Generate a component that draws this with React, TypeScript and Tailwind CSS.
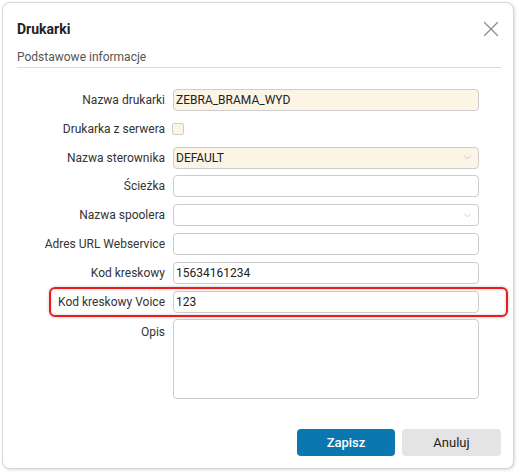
import { X, ChevronDown } from "lucide-react"

const font = { fontFamily: "Roboto, 'Liberation Sans', sans-serif" }

function Field({
  label,
  value,
  cream,
  select,
}: {
  label: string
  value?: string
  cream?: boolean
  select?: boolean
}) {
  return (
    <div className="flex items-center h-[22px]">
      <label className="w-[156px] shrink-0 text-right text-[12px] text-[#333] pr-[8px] whitespace-nowrap">{label}</label>
      <div
        className={`relative flex items-center h-[22px] w-[306px] rounded-[4px] border border-[#cdcdcd] px-[2px] text-[12px] text-[#222] ${
          cream ? "bg-[#fcf4e4]" : "bg-white"
        }`}
      >
        <span>{value}</span>
        {select && <ChevronDown className="absolute right-[5px] w-[11px] h-[11px] text-[#b5b5b5]" strokeWidth={1.5} />}
      </div>
    </div>
  )
}

export default function App() {
  return (
    <div className="w-[520px] h-[473px] bg-white" style={font}>
      <div className="ml-[2px] mt-[2px] w-[512px] h-[467px] flex flex-col rounded-[8px] border border-[#d6d6d6] bg-white pl-[14px] pr-[12px] pt-[16px] pb-[12px] shadow-[1px_1px_3px_rgba(0,0,0,0.15)]">
        {/* Header */}
        <div className="flex items-center justify-between h-[20px]">
          <h1 className="text-[14px] font-bold text-[#222]">Drukarki</h1>
          <X className="w-[26px] h-[26px] text-[#8a8a8a] -mr-[3px]" strokeWidth={1.1} />
        </div>
        <div className="mt-[8px] h-[21px] leading-[20px] text-[12px] text-[#555] border-b border-[#dcdcdc]">
          Podstawowe informacje
        </div>

        {/* Form */}
        <div className="mt-[21px] flex flex-col gap-[6.8px]">
          <Field label="Nazwa drukarki" value="ZEBRA_BRAMA_WYD" cream />
          <div className="flex items-center h-[22px]">
            <label className="w-[156px] shrink-0 text-right text-[12px] text-[#333] pr-[8px]">Drukarka z serwera</label>
            <div className="w-[12px] h-[12px] -ml-[1px] rounded-[2px] border border-[#cdcdcd] bg-[#fcf4e4]" />
          </div>
          <Field label="Nazwa sterownika" value="DEFAULT" cream select />
          <Field label="Ścieżka" />
          <Field label="Nazwa spoolera" select />
          <Field label="Adres URL Webservice" />
          <Field label="Kod kreskowy" value="15634161234" />
          <div className="relative">
            <Field label="Kod kreskowy Voice" value="123" />
            <div className="absolute left-[32px] right-[-7px] top-[-4px] bottom-[-4px] rounded-[6px] border-2 border-[#f01818] shadow-[0_0_3px_rgba(0,0,0,0.25),inset_0_0_3px_rgba(0,0,0,0.2)] pointer-events-none" />
          </div>
          <div className="flex items-start">
            <label className="w-[156px] shrink-0 text-right text-[12px] text-[#333] pr-[8px] pt-[4px]">Opis</label>
            <div className="h-[80px] w-[306px] rounded-[4px] border border-[#cdcdcd] bg-white" />
          </div>
        </div>

        <div className="flex-1" />

        {/* Footer */}
        <div className="flex justify-end gap-[7px]">
          <button className="w-[98px] h-[27px] rounded-[4px] bg-[#0a77b0] text-white text-[13px] font-medium">
            Zapisz
          </button>
          <button className="w-[99px] h-[27px] rounded-[4px] bg-[#e4e4e4] text-[#222] text-[13px]">Anuluj</button>
        </div>
      </div>
    </div>
  )
}
